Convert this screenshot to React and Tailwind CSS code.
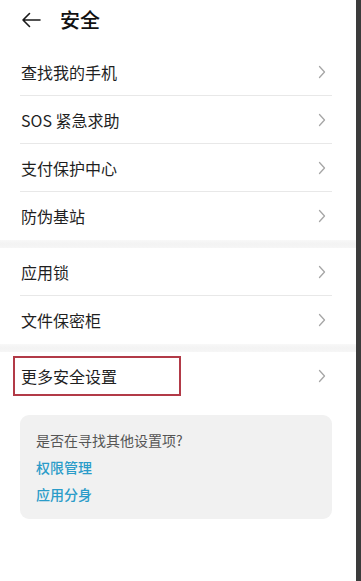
import React from "react";

const font = { fontFamily: '"Noto Sans CJK SC", "Noto Sans", sans-serif' };

function Chevron() {
  return (
    <svg width="8" height="14" viewBox="0 0 8 14" fill="none" className="shrink-0">
      <path d="M1.5 1.5 L6.5 7 L1.5 12.5" stroke="#a6a6a6" strokeWidth="1.3" strokeLinecap="round" strokeLinejoin="round" />
    </svg>
  );
}

function Row({ label, last, highlight }) {
  return (
    <div className="relative h-[48px] flex items-center pl-[21px] pr-[30px]">
      <span className="flex-1 text-[16px] text-[#1f1f1f] leading-none">{label}</span>
      <Chevron />
      {!last && <div className="absolute left-[20px] right-[24px] bottom-0 h-px bg-[#e8e8e8]" />}
      {highlight && (
        <div className="absolute left-[13px] top-[4px] w-[168px] h-[40px] border-2 border-[#b23a47]" />
      )}
    </div>
  );
}

function Gap() {
  return <div className="h-[8px] bg-linear-to-b from-[#f8f8f8] via-[#f3f3f3] to-[#f6f6f6]" />;
}

export default function App() {
  return (
    <div className="flex w-[361px] h-[581px] overflow-hidden" style={font}>
      <div className="w-[356px] h-full bg-white flex flex-col">
        <div className="h-[40px] flex items-center pl-[21px]">
          <svg width="20" height="16" viewBox="0 0 20 16" fill="none">
            <path d="M19 8 H2 M8.5 1.5 L2 8 L8.5 14.5" stroke="#1a1a1a" strokeWidth="1.6" strokeLinecap="round" strokeLinejoin="round" />
          </svg>
          <span className="ml-[19px] text-[20px] text-[#111] leading-none font-medium">安全</span>
        </div>
        <div className="h-[8px]" />
        <Row label="查找我的手机" />
        <Row label="SOS 紧急求助" />
        <Row label="支付保护中心" />
        <Row label="防伪基站" last />
        <Gap />
        <Row label="应用锁" />
        <Row label="文件保密柜" last />
        <Gap />
        <Row label="更多安全设置" last highlight />
        <div className="mt-[15px] mx-[20px] w-[312px] h-[104px] rounded-[9px] bg-[#f1f1f1] pl-[16px] pt-[18px] flex flex-col">
          <span className="text-[14px] text-[#555] leading-none">是否在寻找其他设置项?</span>
          <span className="mt-[13px] text-[14px] text-[#2b9cc9] font-medium leading-none">权限管理</span>
          <span className="mt-[13px] text-[14px] text-[#2b9cc9] font-medium leading-none">应用分身</span>
        </div>
      </div>
      <div className="flex-1 h-full bg-[#3b3b3b]" />
    </div>
  );
}
